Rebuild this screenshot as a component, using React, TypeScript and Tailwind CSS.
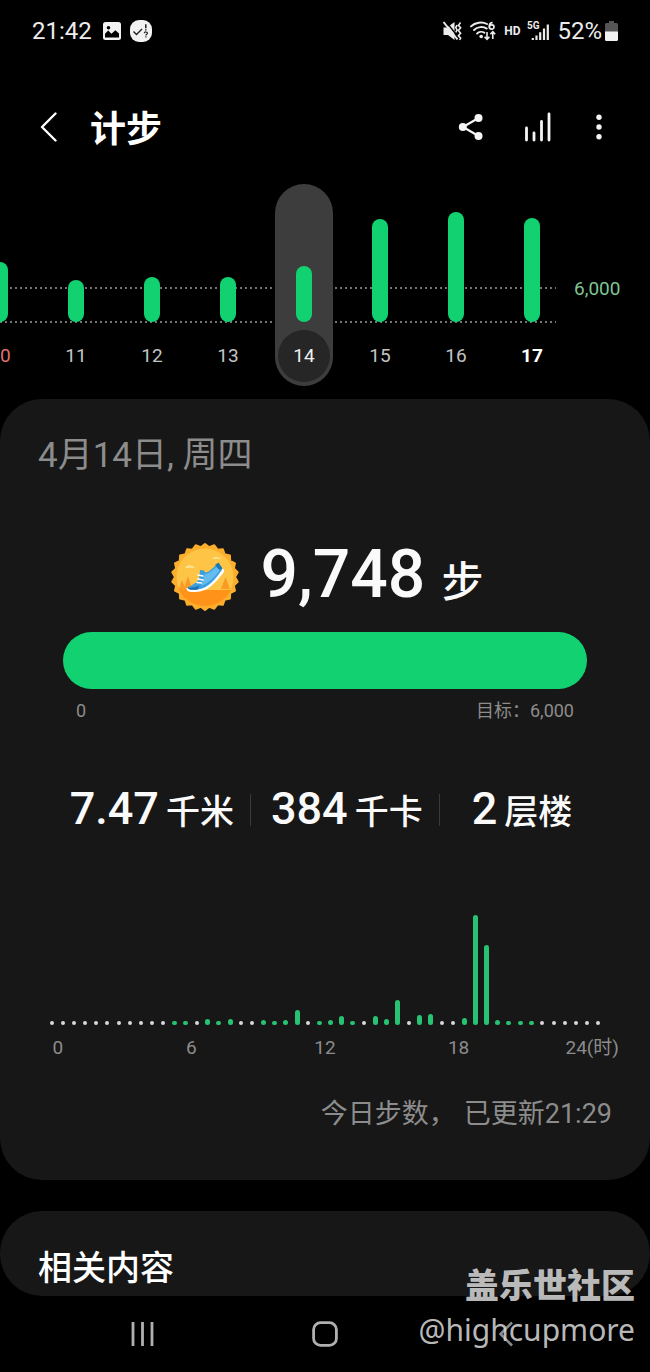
const days = [
  { day: "10", height: 60, tone: "text-[#e0706f]" },
  { day: "11", height: 42, tone: "text-[#c4c4c4]" },
  { day: "12", height: 45, tone: "text-[#c4c4c4]" },
  { day: "13", height: 45, tone: "text-[#c4c4c4]" },
  { day: "14", height: 56, tone: "text-[#f0f0f0]", selected: true },
  { day: "15", height: 103, tone: "text-[#c4c4c4]" },
  { day: "16", height: 110, tone: "text-[#c4c4c4]" },
  { day: "17", height: 104, tone: "text-white font-bold" },
]

// one slot per half hour, 0 means no steps
const slots = [
  0, 0, 0, 0, 0, 0, 0, 0, 0, 0, 0, 4, 4, 0, 6, 4, 6, 0, 0, 5, 4, 5, 15, 0, 4,
  5, 9, 4, 0, 9, 6, 25, 0, 10, 11, 0, 0, 7, 110, 80, 5, 4, 4, 4, 0, 0, 0, 0, 0, 0,
]

const hours = ["0", "6", "12", "18", "24(时)"]

function scallop(cx: number, cy: number, outer: number, inner: number, teeth: number) {
  const points = []
  for (let i = 0; i < teeth * 2; i++) {
    const r = i % 2 === 0 ? outer : inner
    const a = (Math.PI * i) / teeth
    points.push(`${(cx + r * Math.sin(a)).toFixed(1)},${(cy - r * Math.cos(a)).toFixed(1)}`)
  }
  return points.join(" ")
}

function StatusBar() {
  return (
    <div className="flex h-[62px] items-center justify-between pl-8 pr-8 text-[24px] text-[#ececec]">
      <div className="flex items-center">
        <span>21:42</span>
        <svg className="ml-[11px] h-[18px] w-[18px]" viewBox="0 0 18 18">
          <rect width="18" height="18" rx="2.5" fill="#f2f2f2" />
          <circle cx="5.5" cy="5.8" r="1.8" fill="#000" />
          <path d="M2 15.6v-3.8l3.2-3.2 3.2 3.2 4-3.6 3.6 3.4v4z" fill="#000" />
        </svg>
        <svg className="ml-[9px] h-[22px] w-[22px]" viewBox="0 0 22 22">
          <rect width="22" height="22" rx="9" fill="#f2f2f2" />
          <path d="M3.5 11.5l3 3 5.5-5.5" fill="none" stroke="#222" strokeWidth="1.4" />
          <path d="M15.8 4.2v4M15.8 9.2v1.2" stroke="#222" strokeWidth="1.5" />
          <path d="M14.2 13.2c.2-1.7 3.3-1.6 3.2.1 0 1-1.5 1-1.5 2.2M15.9 16.3v1.2" fill="none" stroke="#222" strokeWidth="1.2" />
        </svg>
      </div>
      <div className="flex items-center">
        <svg className="h-5 w-5" viewBox="0 0 20 20">
          <path d="M1.500 6.500H5L12.500 1v18L6 14H1.500z" fill="#ececec" />
          <path d="M3.500 0l15 19" stroke="#000" strokeWidth="1.400" />
          <path d="M1.500 1l14 17.500" stroke="#ececec" strokeWidth="2" />
          <path d="M18.600 1.600l-2.200 2.800 2.200 2.400-2.200 2.800 2.200 2.600-2.200 2.600 2.200 2.400-1 1.600M15 4l-1.200 2.600L15 9l-1.200 2.400" fill="none" stroke="#ececec" strokeWidth="1.600" />
        </svg>
        <svg className="ml-2 h-5 w-[26px]" viewBox="0 0 26 20">
          <g fill="none" stroke="#ececec" strokeWidth="1.9" strokeLinecap="round">
            <path d="M1 5.4C5 1.4 12 .4 17 3" />
            <path d="M4 9c3.400-3.300 9-3.900 12.800-1.400" />
            <path d="M7 12.600c2-2 5.200-2.300 7.400-.8" />
          </g>
          <circle cx="11.200" cy="15.500" r="1.800" fill="#ececec" />
          <path d="M22.600 1.600c-2.600 0-3.400 2-3.400 3.900 0 3.600 4.800 3.300 4.800.5 0-2.700-3.800-2.800-4.600-.2" fill="none" stroke="#ececec" strokeWidth="1.700" />
          <path d="M17 11v7M14.600 15.800L17 18.400l2.400-2.600M22.800 18v-7M20.400 13.200l2.400-2.600 2.400 2.600" fill="none" stroke="#ececec" strokeWidth="1.600" />
        </svg>
        <span className="ml-2 text-[12px] font-bold">HD</span>
        <svg className="ml-[7px] h-5 w-[22px]" viewBox="0 0 22 20">
          <text x="0" y="8" fontSize="10" fontWeight="700" fill="#ececec">5G</text>
          <path d="M5.800 17v2M9.500 14.500V19M13.200 11.200V19M17 7.500V19M20.800 3.500V19" stroke="#ececec" strokeWidth="2.200" />
        </svg>
        <span className="ml-2">52%</span>
        <svg className="ml-[3px] h-5 w-[13px]" viewBox="0 0 13 20">
          <path d="M4 0h5v2h2.500A1.500 1.500 0 0 1 13 3.500V11H0V3.500A1.500 1.500 0 0 1 1.500 2H4z" fill="#555" />
          <path d="M0 10.500h13v8a1.500 1.500 0 0 1-1.500 1.500h-10A1.500 1.500 0 0 1 0 18.500z" fill="#f2f2f2" />
        </svg>
      </div>
    </div>
  )
}

function Header() {
  return (
    <header className="mt-2 flex h-[114px] items-center justify-between pl-10 pr-12">
      <div className="flex items-center gap-8">
        <button aria-label="返回">
          <svg className="h-[30px] w-[18px]" viewBox="0 0 18 30">
            <path d="M15.500 1.500L2 15l13.500 13.500" fill="none" stroke="#fff" strokeWidth="2.400" strokeLinecap="round" strokeLinejoin="round" />
          </svg>
        </button>
        <h1 className="pt-1.5 text-[36px] font-bold leading-[44px]">计步</h1>
      </div>
      <div className="flex items-center">
        <button aria-label="分享">
          <svg className="h-[26px] w-[26px]" viewBox="0 0 26 26">
            <path d="M20.500 4L5 13l15.500 9" fill="none" stroke="#f5f5f5" strokeWidth="2.200" />
            <circle cx="20.500" cy="4" r="4" fill="#f5f5f5" />
            <circle cx="4.800" cy="13" r="4" fill="#f5f5f5" />
            <circle cx="20.500" cy="22" r="4" fill="#f5f5f5" />
          </svg>
        </button>
        <button aria-label="图表" className="ml-10">
          <svg className="h-[30px] w-7" viewBox="0 0 28 30">
            <path d="M2.500 16v12M10 21v7M17.500 9.500V28M25 2v26" stroke="#f5f5f5" strokeWidth="2.800" strokeLinecap="round" />
          </svg>
        </button>
        <button aria-label="更多" className="ml-11">
          <svg className="h-[26px] w-1.5" viewBox="0 0 6 26">
            <circle cx="3" cy="3.200" r="2.700" fill="#f5f5f5" />
            <circle cx="3" cy="13" r="2.700" fill="#f5f5f5" />
            <circle cx="3" cy="22.800" r="2.700" fill="#f5f5f5" />
          </svg>
        </button>
      </div>
    </header>
  )
}

function WeekChart() {
  return (
    <section className="relative flex overflow-hidden">
      {/* goal line and baseline */}
      <div className="absolute left-0 top-[103px] h-[2px] w-[556px] bg-[repeating-linear-gradient(90deg,#757575_0_2px,transparent_2px_5px)]" />
      <div className="absolute left-0 top-[137px] h-[2px] w-[556px] bg-[repeating-linear-gradient(90deg,#757575_0_2px,transparent_2px_5px)]" />
      <div className="relative -ml-[38px] flex shrink-0">
        {days.map((d) => (
          <div key={d.day} className="flex w-[76px] justify-center">
            <button
              className={`flex w-[58px] flex-col items-center rounded-full pb-1 ${d.selected ? "bg-[#3d3d3d]" : ""}`}
            >
              <span className="flex h-[138px] items-end">
                <span className="w-4 rounded-full bg-[#12d170]" style={{ height: d.height }} />
              </span>
              <span
                className={`mt-2 flex h-[52px] w-[52px] items-center justify-center rounded-full text-[19px] ${d.tone} ${
                  d.selected ? "bg-[#262626]" : ""
                }`}
              >
                {d.day}
              </span>
            </button>
          </div>
        ))}
      </div>
      <span className="mt-[93px] pl-1 text-[19px] leading-6 text-[#7cc694]">6,000</span>
    </section>
  )
}

function Badge() {
  return (
    <svg className="h-[68px] w-[68px] shrink-0" viewBox="0 0 68 68">
      <defs>
        <clipPath id="ground">
          <rect x="0" y="47" width="68" height="21" />
        </clipPath>
      </defs>
      <polygon points={scallop(34, 34, 33, 30, 22)} fill="#fbae2c" stroke="#fbae2c" strokeWidth="2" strokeLinejoin="round" />
      <circle cx="34" cy="34" r="28.500" fill="#fec445" />
      <circle cx="34" cy="34" r="29" fill="#ff931a" clipPath="url(#ground)" />
      <path d="M11 37l3.500 10H7.500zM17 33l4.500 14h-9zM54.500 34l4.500 12h-9z" fill="#fb9a24" />
      <path d="M14 25q2-4 6-2.500 3 0 4 2.500zM41 16q2-3 5-2 3 0 4 2z" fill="#fde08a" />
      <path d="M15.500 45c0 4 3 4 9 4 13 0 20-10 27-18 2.500-3 1.500-5 0-5.500L36 42z" fill="#fff" />
      <path d="M16.500 44.500c4-1.500 9-5 11.500-8l1-9.500 4 .5c.5 2 2 2.500 3.500 1.500 4-2 7-6.500 11-7.500l3.500 5.500C45 35 38 45 27 46.500c-5 .5-10 .5-10.500-2z" fill="#3b9fdf" />
      <path d="M34 31c5-.5 8-5 12-7l3 3c-5 7-11 13-19 16z" fill="#64bcef" />
      <path d="M44 22l3.500-2.500 4 6-3 1.500z" fill="#1678b5" />
      <path d="M16.500 44.500c3 .5 8 0 12-2l-2 4c-5 .5-9.500 .5-10-2z" fill="#1c6fae" />
      <path d="M27 32l5 1M27 36l5 1M26 39.500l4.500 .5" stroke="#fff" strokeWidth="1.500" strokeLinecap="round" />
    </svg>
  )
}

function Stat({ value, unit }: { value: string; unit: string }) {
  return (
    <span className="flex items-baseline gap-[7px] whitespace-nowrap font-medium">
      <span className="text-[45px] leading-[48px]">{value}</span>
      <span className="text-[34px] leading-[48px]">{unit}</span>
    </span>
  )
}

function DayCard() {
  return (
    <section className="mt-[13px] overflow-hidden rounded-[42px] bg-[#171717] pb-[50px] pt-9 text-[#8c8c8c]">
      <h2 className="px-[38px] text-[35px] leading-[42px]">4月14日, 周四</h2>

      <div className="mt-[66px] flex h-[68px] items-center justify-center pl-1 text-[#fafafa]">
        <Badge />
        <p className="ml-[22px] flex items-baseline gap-4 pt-1 font-medium">
          <span className="text-[66px] leading-[68px]">9,748</span>
          <span className="text-[42px] leading-[68px]">步</span>
        </p>
      </div>

      <div className="mt-[21px] px-[63px]">
        <div className="h-[57px] rounded-full bg-[#12d170]" />
        <div className="mt-2.5 flex justify-between px-[13px] text-[18px] leading-6">
          <span>0</span>
          <span>目标：6,000</span>
        </div>
      </div>

      <div className="mt-[61px] flex h-[52px] items-center justify-center pr-2 text-[#fafafa]">
        <Stat value="7.47" unit="千米" />
        <span className="ml-4 mr-5 h-8 w-px bg-[#3a3a3a]" />
        <Stat value="384" unit="千卡" />
        <span className="ml-4 mr-8 h-8 w-px bg-[#3a3a3a]" />
        <Stat value="2" unit="层楼" />
      </div>

      <div className="mt-[79px] flex h-[110px] items-end px-[46px]">
        {slots.map((height, i) => (
          <span key={i} className="flex flex-1 justify-center">
            {height > 0 ? (
              <span className="w-[5px] rounded-full bg-[#27c372]" style={{ height }} />
            ) : (
              <span className="h-1 w-1 rounded-full bg-[#d8d8d8]" />
            )}
          </span>
        ))}
      </div>
      <div className="-mx-[9px] mt-[11px] grid grid-cols-5 text-center text-[19px] leading-6">
        {hours.map((h) => (
          <span key={h}>{h}</span>
        ))}
      </div>

      <p className="mt-[38px] flex justify-end gap-2 px-[38px] text-[27px] leading-8">
        <span>今日步数，</span>
        <span>已更新21:29</span>
      </p>
    </section>
  )
}

function NavBar() {
  return (
    <nav className="flex h-[76px] items-center justify-around px-[52px]">
      <button aria-label="最近">
        <svg className="h-[26px] w-[26px]" viewBox="0 0 26 26">
          <path d="M3 1v24M12.500 1v24M22 1v24" stroke="#b0b0b0" strokeWidth="2.800" />
        </svg>
      </button>
      <button aria-label="主页">
        <svg className="h-[26px] w-[26px]" viewBox="0 0 26 26">
          <rect x="1.600" y="1.600" width="22.800" height="22.800" rx="7" fill="none" stroke="#b0b0b0" strokeWidth="2.800" />
        </svg>
      </button>
      <button aria-label="后退">
        <svg className="h-[26px] w-[26px]" viewBox="0 0 26 26">
          <path d="M18 1.500L6.500 13 18 24.500" fill="none" stroke="#8a8a8a" strokeWidth="2.600" />
        </svg>
      </button>
    </nav>
  )
}

export default function App() {
  return (
    <div
      lang="zh-CN"
      className="relative min-h-screen overflow-hidden bg-black font-['Roboto','Noto_Sans_CJK_SC',sans-serif] text-white"
    >
      <StatusBar />
      <Header />
      <WeekChart />
      <DayCard />
      <section className="mt-[31px] h-[85px] rounded-[42px] bg-[#171717] px-[38px] pt-9">
        <h2 className="text-[34px] font-medium leading-[42px]">相关内容</h2>
      </section>
      <NavBar />

      {/* community mark over the page corner */}
      <div className="pointer-events-none absolute bottom-5 right-[15px] text-right text-[#d2d2d2]/90">
        <p className="text-[34px] font-black leading-[44px]">盖乐世社区</p>
        <p className="font-['Noto_Sans',sans-serif] text-[30px] leading-[44px]">@highcupmore</p>
      </div>
    </div>
  )
}
